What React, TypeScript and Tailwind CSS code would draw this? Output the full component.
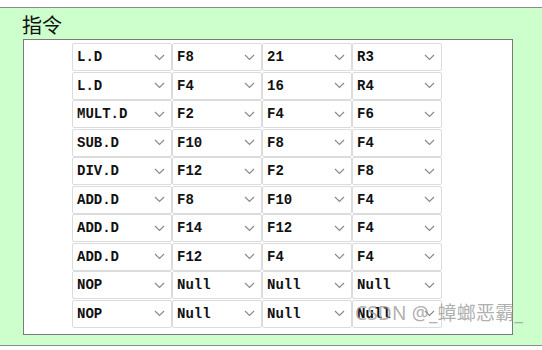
import React from 'react'

const rows: string[][] = [
  ['L.D', 'F8', '21', 'R3'],
  ['L.D', 'F4', '16', 'R4'],
  ['MULT.D', 'F2', 'F4', 'F6'],
  ['SUB.D', 'F10', 'F8', 'F4'],
  ['DIV.D', 'F12', 'F2', 'F8'],
  ['ADD.D', 'F8', 'F10', 'F4'],
  ['ADD.D', 'F14', 'F12', 'F4'],
  ['ADD.D', 'F12', 'F4', 'F4'],
  ['NOP', 'Null', 'Null', 'Null'],
  ['NOP', 'Null', 'Null', 'Null'],
]

function Chevron() {
  return (
    <svg width="11" height="7" viewBox="0 0 11 7" className="shrink-0">
      <polyline points="1,1 5.5,5.5 10,1" fill="none" stroke="#8a8a8a" strokeWidth="1.2" />
    </svg>
  )
}

function Cell({ value, wide }: { value: string; wide?: boolean }) {
  return (
    <div
      className={`${wide ? 'w-[100px]' : 'w-[90px]'} h-full flex items-center justify-between pl-[4px] pr-[6px] border border-[#dcdcdc] rounded-[2px] bg-white`}
    >
      <span className="text-[14px] font-bold text-[#111] leading-none whitespace-pre">{value}</span>
      <Chevron />
    </div>
  )
}

export default function App() {
  return (
    <div className="w-[542px] h-[350px] bg-white relative overflow-hidden" style={{ fontFamily: '"Liberation Mono", monospace' }}>
      <div className="h-[7px] bg-white" />
      <div className="h-[339px] bg-[#ccffcc] border-t border-b border-[#8c8c8c]">
        <div
          className="pl-[22px] pt-[4px] h-[31px] text-[20px] leading-[26px] text-[#111]"
          style={{ fontFamily: '"Noto Sans CJK SC", sans-serif' }}
        >
          指令
        </div>
        <div className="ml-[23px] w-[490px] h-[296px] bg-white border border-[#7a7a7a] pl-[48px] pt-[3px]">
          <div className="grid grid-rows-[repeat(10,28.5px)]">
            {rows.map((r, i) => (
              <div key={i} className="flex h-[28px]">
                {r.map((v, j) => (
                  <Cell key={j} value={v} wide={j === 0} />
                ))}
              </div>
            ))}
          </div>
        </div>
      </div>
      <div
        className="absolute left-[355px] top-[304px] text-[19px] text-[#9a9a9a]/80 leading-none tracking-[0.2px]"
        style={{ fontFamily: '"Noto Sans", "Noto Sans CJK SC", sans-serif' }}
      >
        CSDN @_蟑螂恶霸_
      </div>
    </div>
  )
}
